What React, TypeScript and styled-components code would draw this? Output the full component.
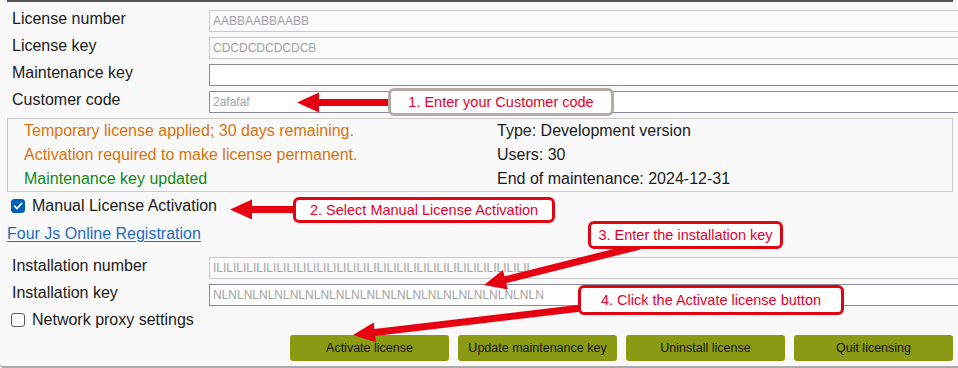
import React from "react";
import styled, { createGlobalStyle } from "styled-components";

const GlobalStyle = createGlobalStyle`
  html, body {
    margin: 0;
    padding: 0;
    background: #f9f9f9;
  }
  * {
    box-sizing: border-box;
  }
`;

const Page = styled.div`
  position: relative;
  width: 958px;
  height: 368px;
  overflow: hidden;
  background: #f9f9f9;
  font-family: "Liberation Sans", Arial, sans-serif;
  font-size: 16px;
  color: #1b1b1b;
`;

const Frame = styled.div`
  display: flex;
  flex-direction: column;
  height: 368px;
  padding: 0 5px 0 7px;
  border-bottom: 2px solid #ababab;
  border-bottom-left-radius: 4px;
`;

const TopRule = styled.div`
  height: 2px;
  background: #545454;
`;

const Fields = styled.div<{ $top: number }>`
  display: flex;
  flex-direction: column;
  gap: 5px;
  margin-top: ${({ $top }) => $top}px;
  margin-right: -12px;
`;

const FieldRow = styled.div`
  display: grid;
  grid-template-columns: 197px 1fr;
  padding-left: 5px;
  height: 22px;
`;

const Label = styled.span`
  line-height: 18px;
  white-space: nowrap;
`;

const Input = styled.input<{ $active?: boolean }>`
  height: 22px;
  width: 100%;
  margin: 0;
  padding: 0 3px;
  border: 1px solid ${({ $active }) => ($active ? "#8b8b9e" : "#c9c9c9")};
  border-radius: 0;
  background: ${({ $active }) => ($active ? "#ffffff" : "#fbfbfb")};
  font-family: "Liberation Sans", Arial, sans-serif;
  font-size: 12px;
  color: #a2a2a2;
  outline: none;
`;

const StatusBox = styled.div`
  display: grid;
  grid-template-columns: 473px 1fr;
  margin-top: 5px;
  padding-left: 16px;
  border: 1px solid #c9c9c9;
  line-height: 24px;
`;

const StatusLine = styled.div<{ $tone?: "warn" | "ok" }>`
  white-space: nowrap;
  color: ${({ $tone }) =>
    $tone === "warn" ? "#d7740f" : $tone === "ok" ? "#12891a" : "#1b1b1b"};
`;

const CheckRow = styled.label<{ $top: number }>`
  display: flex;
  align-items: center;
  gap: 7px;
  height: 20px;
  margin-top: ${({ $top }) => $top}px;
  padding-left: 4px;
  line-height: 20px;
`;

const Box = styled.span<{ $checked?: boolean }>`
  display: flex;
  align-items: center;
  justify-content: center;
  width: 14px;
  height: 14px;
  border-radius: 3px;
  border: 1px solid ${({ $checked }) => ($checked ? "#005fb8" : "#5d5d5d")};
  background: ${({ $checked }) => ($checked ? "#005fb8" : "#ffffff")};
`;

const RegLink = styled.a`
  display: block;
  margin-top: 8px;
  line-height: 20px;
  color: #1f6cc4;
  text-decoration: underline;
  text-underline-offset: 2px;
`;

const ButtonBar = styled.div`
  display: flex;
  justify-content: flex-end;
  gap: 9px;
  margin-top: 5px;
`;

const Button = styled.button`
  width: 159px;
  height: 26px;
  padding: 0;
  border: none;
  border-radius: 3px;
  background: #8a9a12;
  font-family: "Liberation Sans", Arial, sans-serif;
  font-size: 12.5px;
  color: #161616;
`;

const Callout = styled.div<{ $x: number; $y: number; $w: number; $h: number; $grey?: boolean }>`
  position: absolute;
  left: ${({ $x }) => $x}px;
  top: ${({ $y }) => $y}px;
  width: ${({ $w }) => $w}px;
  height: ${({ $h }) => $h}px;
  display: flex;
  align-items: center;
  justify-content: center;
  border: 3px solid ${({ $grey }) => ($grey ? "#b4aca5" : "#e10514")};
  border-radius: 6px;
  background: #ffffff;
  font-size: 14.5px;
  color: #e6002b;
  white-space: nowrap;
`;

const Overlay = styled.svg`
  position: absolute;
  left: 0;
  top: 0;
  pointer-events: none;
`;

function arrowPoints(x1: number, y1: number, x2: number, y2: number, shaft = 7, headLen = 22, headW = 20) {
  const dx = x2 - x1;
  const dy = y2 - y1;
  const len = Math.hypot(dx, dy);
  const ux = dx / len;
  const uy = dy / len;
  const nx = -uy;
  const ny = ux;
  const bx = x2 - ux * headLen;
  const by = y2 - uy * headLen;
  const s = shaft / 2;
  const h = headW / 2;
  const pts = [
    [x1 + nx * s, y1 + ny * s],
    [bx + nx * s, by + ny * s],
    [bx + nx * h, by + ny * h],
    [x2, y2],
    [bx - nx * h, by - ny * h],
    [bx - nx * s, by - ny * s],
    [x1 - nx * s, y1 - ny * s],
  ];
  return pts.map((p) => p.map((v) => v.toFixed(1)).join(",")).join(" ");
}

const arrows = [
  [392, 102.5, 297, 102.5],
  [297, 209.5, 230, 209.5],
  [640, 246, 484, 285],
  [590, 307, 353, 335],
];

const callouts = [
  { x: 388, y: 88, w: 226, h: 28, text: "1. Enter your Customer code", grey: true },
  { x: 293, y: 197, w: 262, h: 26, text: "2. Select Manual License Activation" },
  { x: 588, y: 221, w: 195, h: 28, text: "3. Enter the installation key" },
  { x: 578, y: 285, w: 266, h: 30, text: "4. Click the Activate license button" },
];

const Check = () => (
  <svg width="10" height="10" viewBox="0 0 10 10">
    <path d="M1.5 5.2 L4 7.6 L8.6 2.4" fill="none" stroke="#ffffff" strokeWidth="1.6" strokeLinecap="round" strokeLinejoin="round" />
  </svg>
);

export default function App() {
  return (
    <Page>
      <GlobalStyle />
      <Frame>
        <TopRule />
        <Fields $top={8}>
          <FieldRow>
            <Label>License number</Label>
            <Input readOnly value="AABBAABBAABB" />
          </FieldRow>
          <FieldRow>
            <Label>License key</Label>
            <Input readOnly value="CDCDCDCDCDCB" />
          </FieldRow>
          <FieldRow>
            <Label>Maintenance key</Label>
            <Input readOnly $active value="" />
          </FieldRow>
          <FieldRow>
            <Label>Customer code</Label>
            <Input readOnly $active value="2afafaf" />
          </FieldRow>
        </Fields>

        <StatusBox>
          <div>
            <StatusLine $tone="warn">Temporary license applied; 30 days remaining.</StatusLine>
            <StatusLine $tone="warn">Activation required to make license permanent.</StatusLine>
            <StatusLine $tone="ok">Maintenance key updated</StatusLine>
          </div>
          <div>
            <StatusLine>Type: Development version</StatusLine>
            <StatusLine>Users: 30</StatusLine>
            <StatusLine>End of maintenance: 2024-12-31</StatusLine>
          </div>
        </StatusBox>

        <CheckRow $top={4}>
          <Box $checked>
            <Check />
          </Box>
          Manual License Activation
        </CheckRow>

        <RegLink href="#">Four Js Online Registration</RegLink>

        <Fields $top={13}>
          <FieldRow>
            <Label>Installation number</Label>
            <Input readOnly value={"IL".repeat(32)} />
          </FieldRow>
          <FieldRow>
            <Label>Installation key</Label>
            <Input readOnly $active value={"NL".repeat(21) + "N"} />
          </FieldRow>
        </Fields>

        <CheckRow $top={4}>
          <Box />
          Network proxy settings
        </CheckRow>

        <ButtonBar>
          <Button>Activate license</Button>
          <Button>Update maintenance key</Button>
          <Button>Uninstall license</Button>
          <Button>Quit licensing</Button>
        </ButtonBar>
      </Frame>

      <Overlay width="958" height="368" viewBox="0 0 958 368">
        {arrows.map(([x1, y1, x2, y2], i) => (
          <polygon key={i} points={arrowPoints(x1, y1, x2, y2)} fill="#e60012" />
        ))}
      </Overlay>

      {callouts.map((c) => (
        <Callout key={c.text} $x={c.x} $y={c.y} $w={c.w} $h={c.h} $grey={c.grey}>
          {c.text}
        </Callout>
      ))}
    </Page>
  );
}
